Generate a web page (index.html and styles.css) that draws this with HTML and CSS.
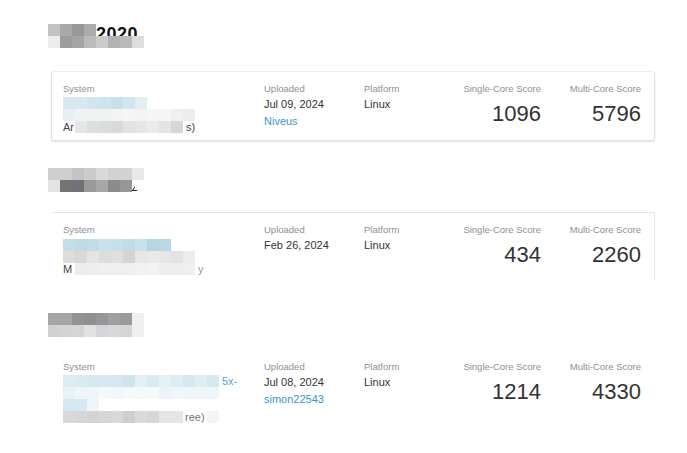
FILE: index.html
```html
<!DOCTYPE html>
<html lang="en">
<head>
<meta charset="utf-8">
<title>Benchmark results</title>
<link rel="stylesheet" href="styles.css">
</head>
<body>
<main class="page">

  <section class="run run--1">
    <div class="mosaic heading">
      <div class="mrow">
        <span class="px" style="background:#c3c3c3"></span><span class="px" style="background:#a9a9a9"></span><span class="px" style="background:#989898"></span><span class="px" style="background:#ababab"></span><span class="peek">2020</span>
      </div>
      <div class="mrow">
        <span class="px" style="background:#ececec"></span><span class="px" style="background:#9c9c9c"></span><span class="px" style="background:#a5a5a5"></span><span class="px" style="background:#bbbbbb"></span><span class="px" style="background:#cbcbcb"></span><span class="px" style="background:#b3b3b3"></span><span class="px" style="background:#bababa"></span><span class="px" style="background:#dedede"></span>
      </div>
    </div>
    <div class="card card--1">
      <div class="col col-system">
        <div class="label">System</div>
        <div class="mosaic sys">
          <div class="mrow">
            <span class="px" style="background:#d7e8ef"></span><span class="px" style="background:#d8e8ef"></span><span class="px" style="background:#d2e5ed"></span><span class="px" style="background:#cfe3ec"></span><span class="px" style="background:#c9e0ea"></span><span class="px" style="background:#d3e6ee"></span><span class="px" style="background:#e4eff4"></span>
          </div>
          <div class="mrow">
            <span class="px" style="background:#e9eff1"></span><span class="px" style="background:#eef2f4"></span><span class="px" style="background:#eef2f3"></span><span class="px" style="background:#f0f3f4"></span><span class="px" style="background:#f1f3f4"></span><span class="px" style="background:#f5f6f7"></span><span class="px" style="background:#f3f3f4"></span><span class="px" style="background:#f4f5f5"></span><span class="px" style="background:#f5f5f5"></span><span class="px" style="background:#f0f0f0"></span><span class="px" style="background:#ececec"></span>
          </div>
          <div class="mrow">
            <span class="mtext mtext--lead">Ar</span><span class="px" style="background:#e6e6e6"></span><span class="px" style="background:#dedede"></span><span class="px" style="background:#dcdcdc"></span><span class="px" style="background:#d9d9d9"></span><span class="px" style="background:#e2e2e2"></span><span class="px" style="background:#e6e6e6"></span><span class="px" style="background:#eaeaea"></span><span class="px" style="background:#e4e4e4"></span><span class="px" style="background:#d6d6d6"></span><span class="mtext">&nbsp;s)</span>
          </div>
        </div>
      </div>
      <div class="col">
        <div class="label">Uploaded</div>
        <div class="val">Jul 09, 2024</div>
        <a class="link" href="#">Niveus</a>
      </div>
      <div class="col">
        <div class="label">Platform</div>
        <div class="val">Linux</div>
      </div>
      <div class="col col-score">
        <div class="label">Single-Core Score</div>
        <div class="score">1096</div>
      </div>
      <div class="col col-score">
        <div class="label">Multi-Core Score</div>
        <div class="score">5796</div>
      </div>
    </div>
  </section>

  <section class="run run--2">
    <div class="mosaic heading">
      <div class="mrow">
        <span class="px" style="background:#cfcfcf"></span><span class="px" style="background:#cfcfcf"></span><span class="px" style="background:#c5c5c5"></span><span class="px" style="background:#cccccc"></span><span class="px" style="background:#d9d9d9"></span><span class="px" style="background:#d2d2d2"></span><span class="px" style="background:#d3d3d3"></span><span class="px" style="background:#e8e8e8"></span>
      </div>
      <div class="mrow">
        <span class="px" style="background:#e3e3e3"></span><span class="px" style="background:#747474"></span><span class="px" style="background:#717178"></span><span class="px" style="background:#9a9a9a"></span><span class="px" style="background:#a7a7a7"></span><span class="px" style="background:#8b8b8b"></span><span class="px" style="background:#979797"></span><span class="tick"></span>
      </div>
    </div>
    <div class="card card--2">
      <div class="col col-system">
        <div class="label">System</div>
        <div class="mosaic sys sys--2">
          <div class="mrow">
            <span class="px" style="background:#c4dee7"></span><span class="px" style="background:#bfdce6"></span><span class="px" style="background:#c2dde6"></span><span class="px" style="background:#c9e1e9"></span><span class="px" style="background:#c6dfe8"></span><span class="px" style="background:#c0dce6"></span><span class="px" style="background:#c9e1e9"></span><span class="px" style="background:#b5d7e2"></span><span class="px" style="background:#b8d9e3"></span>
          </div>
          <div class="mrow">
            <span class="px" style="background:#dcdcdc"></span><span class="px" style="background:#d8d8d8"></span><span class="px" style="background:#e4e4e4"></span><span class="px" style="background:#dcdcdc"></span><span class="px" style="background:#dfdfdf"></span><span class="px" style="background:#d4d4d4"></span><span class="px" style="background:#e7e7e7"></span><span class="px" style="background:#e9e9e9"></span><span class="px" style="background:#e6e6e6"></span><span class="px" style="background:#e3e3e3"></span><span class="px" style="background:#ececec"></span>
          </div>
          <div class="mrow">
            <span class="mtext mtext--lead">M</span><span class="px" style="background:#ececec"></span><span class="px" style="background:#eeeeee"></span><span class="px" style="background:#f0f0f0"></span><span class="px" style="background:#efefef"></span><span class="px" style="background:#f0f0f0"></span><span class="px" style="background:#f1f1f1"></span><span class="px" style="background:#f3f3f3"></span><span class="px" style="background:#eeeeee"></span><span class="px" style="background:#ededed"></span><span class="px" style="background:#efefef"></span><span class="mtext mtext--faint">&nbsp;y</span>
          </div>
        </div>
      </div>
      <div class="col">
        <div class="label">Uploaded</div>
        <div class="val">Feb 26, 2024</div>
      </div>
      <div class="col">
        <div class="label">Platform</div>
        <div class="val">Linux</div>
      </div>
      <div class="col col-score">
        <div class="label">Single-Core Score</div>
        <div class="score">434</div>
      </div>
      <div class="col col-score">
        <div class="label">Multi-Core Score</div>
        <div class="score">2260</div>
      </div>
    </div>
  </section>

  <section class="run run--3">
    <div class="mosaic heading">
      <div class="mrow">
        <span class="px" style="background:#a5a5a5"></span><span class="px" style="background:#a4a6a6"></span><span class="px" style="background:#939393"></span><span class="px" style="background:#908e8e"></span><span class="px" style="background:#94969a"></span><span class="px" style="background:#a0a0a0"></span><span class="px" style="background:#9b9b9b"></span><span class="px" style="background:#eef1f0"></span>
      </div>
      <div class="mrow">
        <span class="px" style="background:#d1d1d1"></span><span class="px" style="background:#d4d4d4"></span><span class="px" style="background:#d2d6d6"></span><span class="px" style="background:#e3e2e1"></span><span class="px" style="background:#d5d5d7"></span><span class="px" style="background:#d8d8d8"></span><span class="px" style="background:#d5d5d5"></span><span class="px" style="background:#f0f0f0"></span>
      </div>
    </div>
    <div class="card card--3">
      <div class="col col-system">
        <div class="label">System</div>
        <div class="mosaic sys">
          <div class="mrow">
            <span class="px" style="background:#dbecf2"></span><span class="px" style="background:#d9eaf1"></span><span class="px" style="background:#d4e8ef"></span><span class="px" style="background:#d6e9f0"></span><span class="px" style="background:#d5e8ef"></span><span class="px" style="background:#cfe4ec"></span><span class="px" style="background:#e3f0f5"></span><span class="px" style="background:#d9ebf1"></span><span class="px" style="background:#e5f1f5"></span><span class="px" style="background:#dceef3"></span><span class="px" style="background:#d5e8ef"></span><span class="px" style="background:#dfeef3"></span><span class="px" style="background:#d6e9f0"></span><span class="mtext mtext--link">5x-</span>
          </div>
          <div class="mrow">
            <span class="px" style="background:#e8f3f6"></span><span class="px" style="background:#eef6f9"></span><span class="px" style="background:#eff6f9"></span><span class="px" style="background:#f4f9fb"></span><span class="px" style="background:#f2f8fa"></span><span class="px" style="background:#f5f9fb"></span><span class="px" style="background:#f3f8fa"></span><span class="px" style="background:#f5f9fb"></span><span class="px" style="background:#ecf4f7"></span><span class="px" style="background:#f0f7f9"></span><span class="px" style="background:#eef6f9"></span><span class="px" style="background:#eef6f8"></span><span class="px" style="background:#eff6f9"></span>
          </div>
          <div class="mrow">
            <span class="px" style="background:#d4e8ef"></span><span class="px" style="background:#d6e9f0"></span><span class="px" style="background:#eff6f9"></span>
          </div>
          <div class="mrow">
            <span class="px" style="background:#d8d8d8"></span><span class="px" style="background:#d6d6d6"></span><span class="px" style="background:#d3d3d3"></span><span class="px" style="background:#d6d6d6"></span><span class="px" style="background:#d9d9d9"></span><span class="px" style="background:#cecece"></span><span class="px" style="background:#dadada"></span><span class="px" style="background:#d6d6d6"></span><span class="px" style="background:#e5e5e5"></span><span class="px" style="background:#e5e5e5"></span><span class="mtext mtext--gray">ree)</span><span class="px" style="background:#f4f4f4"></span>
          </div>
        </div>
      </div>
      <div class="col">
        <div class="label">Uploaded</div>
        <div class="val">Jul 08, 2024</div>
        <a class="link" href="#">simon22543</a>
      </div>
      <div class="col">
        <div class="label">Platform</div>
        <div class="val">Linux</div>
      </div>
      <div class="col col-score">
        <div class="label">Single-Core Score</div>
        <div class="score">1214</div>
      </div>
      <div class="col col-score">
        <div class="label">Multi-Core Score</div>
        <div class="score">4330</div>
      </div>
    </div>
  </section>

</main>
</body>
</html>
```

FILE: styles.css
```css
html, body {
  margin: 0;
  padding: 0;
  background: #ffffff;
}

body {
  font-family: "Liberation Sans", Arial, sans-serif;
  color: #333333;
}

.page {
  padding: 24px 0 0 48px;
}

/* pixelated (redacted) areas */
.mosaic {
  display: flex;
  flex-direction: column;
}

.mrow {
  display: flex;
  align-items: flex-start;
  height: 12px;
}

.px {
  flex: none;
  width: 12px;
  height: 12px;
}

.peek {
  flex: none;
  height: 12px;
  overflow: hidden;
  font-size: 18px;
  line-height: 20px;
  font-weight: bold;
  color: #111111;
  letter-spacing: 0.5px;
}

.tick {
  flex: none;
  width: 4px;
  height: 3px;
  margin-top: 7px;
  margin-left: 1px;
  border-bottom: 1px solid #222;
  border-left: 1px solid #222;
  transform: skewX(-30deg);
}

.mtext {
  flex: none;
  font-size: 11px;
  line-height: 12px;
  height: 12px;
  color: #444444;
  white-space: nowrap;
}

.mtext--lead {
  width: 12px;
  overflow: hidden;
}

.mtext--faint {
  color: #9a9a9a;
}

.mtext--link {
  color: #4aa6cc;
  margin-left: 3px;
}

.mtext--gray {
  color: #777777;
  padding: 0 2px;
}

/* result cards */
.card {
  box-sizing: border-box;
  width: 604px;
  margin-left: 3px;
  display: grid;
  grid-template-columns: 201px 100px 77px 100px 100px;
  padding: 10px 13px 7px 11px;
  border: 1px solid transparent;
}

.card--1 {
  margin-top: 23px;
  border-color: #e2e2e2;
  border-top-color: #efefef;
  border-radius: 3px;
  box-shadow: 0 1px 2px rgba(0, 0, 0, 0.12);
}

.card--2 {
  margin-top: 20px;
  padding-bottom: 4px;
  border-top-color: #e6e6e6;
  border-right-color: #e4e4e4;
}

.card--3 {
  margin-top: 12px;
}

.run--2 {
  margin-top: 27px;
}

.run--3 {
  margin-top: 33px;
}

.heading {
  height: 24px;
}

.sys {
  margin-top: 1px;
}

.sys--2 {
  margin-top: 2px;
}

.label {
  font-size: 9.5px;
  line-height: 14px;
  color: #8f8f8f;
  white-space: nowrap;
}

.val {
  font-size: 11px;
  line-height: 17px;
  color: #333333;
}

.link {
  display: block;
  font-size: 11px;
  line-height: 17px;
  color: #3a97c5;
  text-decoration: none;
}

.col-score {
  text-align: right;
}

.score {
  margin-top: 5px;
  font-size: 22px;
  line-height: 26px;
  color: #333333;
}
```
